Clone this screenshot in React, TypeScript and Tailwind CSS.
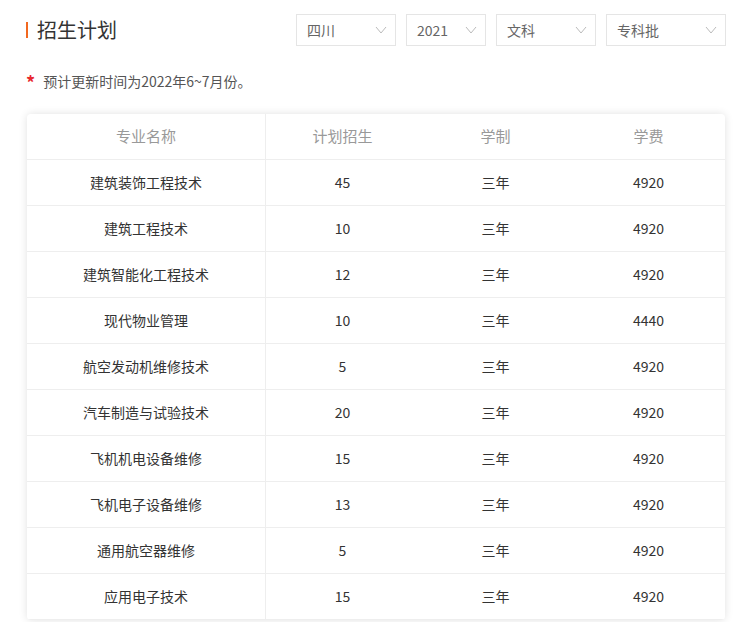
import React from "react";

const rows: [string, string, string, string][] = [
  ["建筑装饰工程技术", "45", "三年", "4920"],
  ["建筑工程技术", "10", "三年", "4920"],
  ["建筑智能化工程技术", "12", "三年", "4920"],
  ["现代物业管理", "10", "三年", "4440"],
  ["航空发动机维修技术", "5", "三年", "4920"],
  ["汽车制造与试验技术", "20", "三年", "4920"],
  ["飞机机电设备维修", "15", "三年", "4920"],
  ["飞机电子设备维修", "13", "三年", "4920"],
  ["通用航空器维修", "5", "三年", "4920"],
  ["应用电子技术", "15", "三年", "4920"],
];

function Sel({ label, w }: { label: string; w: string }) {
  return (
    <div className={`${w} h-[32px] border border-[#e5e5e5] flex items-center justify-between pl-[10px] pr-[8px] text-[14px] text-[#666]`}>
      <span>{label}</span>
      <svg width="12" height="8" viewBox="0 0 12 8" fill="none" stroke="#bbb" strokeWidth="1">
        <path d="M1 1l5 6 5-6" />
      </svg>
    </div>
  );
}

export default function App() {
  return (
    <div className="w-[738px] h-[622px] bg-white overflow-hidden" style={{ fontFamily: '"Noto Sans CJK SC", "Noto Sans", sans-serif' }}>
      <div className="flex items-center justify-between pl-[26px] pr-[12px] pt-[14px]">
        <div className="flex items-center">
          <div className="w-[2px] h-[16px] bg-[#f2681f]" />
          <span className="ml-[9px] text-[20px] text-[#333] leading-none">招生计划</span>
        </div>
        <div className="flex gap-[10px]">
          <Sel label="四川" w="w-[100px]" />
          <Sel label="2021" w="w-[80px]" />
          <Sel label="文科" w="w-[100px]" />
          <Sel label="专科批" w="w-[120px]" />
        </div>
      </div>
      <div className="mt-[25px] pl-[26px] flex items-center text-[14px] text-[#555]">
        <span className="text-[#e8292f] text-[18px] leading-none mr-[8px] font-bold">*</span>
        <span>预计更新时间为2022年6~7月份。</span>
      </div>
      <div className="mt-[22px] ml-[27px] w-[698px] rounded-[4px] shadow-[0_0_8px_rgba(0,0,0,0.12)] overflow-hidden">
        <div className="flex h-[46px] items-center text-[15px] text-[#999] border-b border-[#eee]">
          <div className="w-[239px] h-full flex items-center justify-center border-r border-[#eee]">专业名称</div>
          <div className="flex-1 text-center">计划招生</div>
          <div className="flex-1 text-center">学制</div>
          <div className="flex-1 text-center">学费</div>
        </div>
        {rows.map((r, i) => (
          <div key={i} className="flex h-[46px] items-center text-[14px] text-[#333] border-b border-[#eee]">
            <div className="w-[239px] h-full flex items-center justify-center border-r border-[#eee]">{r[0]}</div>
            <div className="flex-1 text-center">{r[1]}</div>
            <div className="flex-1 text-center">{r[2]}</div>
            <div className="flex-1 text-center">{r[3]}</div>
          </div>
        ))}
      </div>
    </div>
  );
}
